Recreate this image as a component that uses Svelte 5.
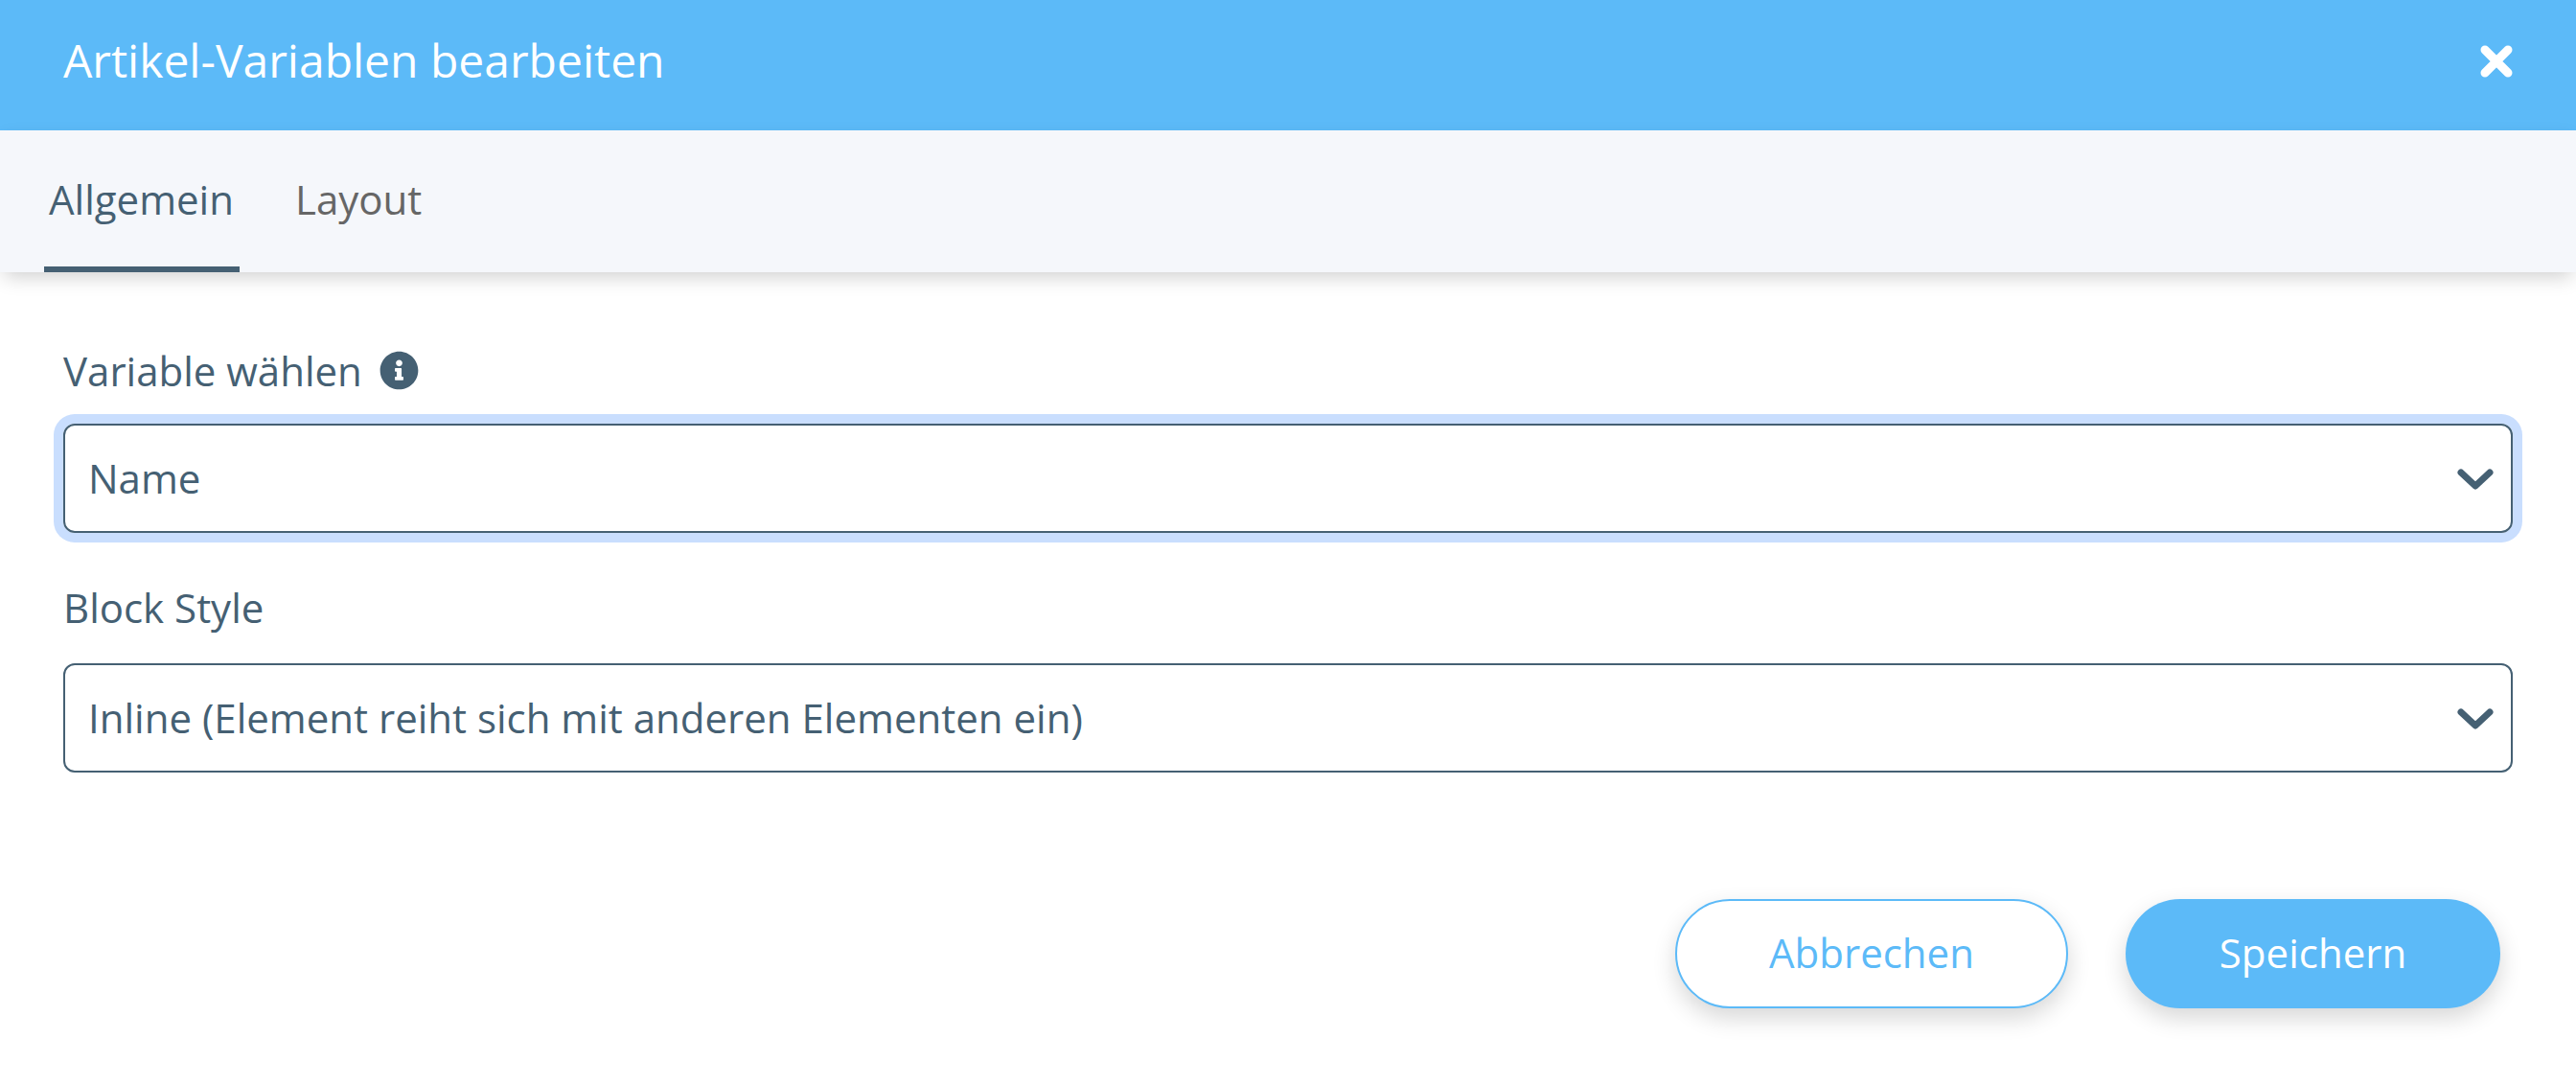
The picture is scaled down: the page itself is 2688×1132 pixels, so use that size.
<script lang="ts">
	let tabs = ['Allgemein', 'Layout'];
	let active = $state('Allgemein');
	let variable = $state('Name');
	let blockStyle = $state('inline');
</script>

<div class="modal">
	<header class="modal-header">
		<h1>Artikel-Variablen bearbeiten</h1>
		<button class="close" aria-label="Schließen">
			<svg viewBox="0 0 34 34" width="34" height="34">
				<path d="M5 5 L29 29 M29 5 L5 29" fill="none" stroke="#fff" stroke-width="9" stroke-linecap="round" />
			</svg>
		</button>
	</header>

	<nav class="tabs">
		{#each tabs as tab}
			<button class="tab" class:active={active === tab} onclick={() => active = tab}>{tab}</button>
		{/each}
	</nav>

	<div class="form">
		<div class="form-group">
			<label for="variable">
				Variable wählen
				<svg class="info" viewBox="0 0 512 512" width="41" height="41">
					<path fill="#456073" d="M256 8C119.043 8 8 119.083 8 256c0 136.997 111.043 248 248 248s248-111.003 248-248C504 119.083 392.957 8 256 8zm0 110c23.196 0 42 18.804 42 42s-18.804 42-42 42-42-18.804-42-42 18.804-42 42-42zm56 254c0 6.627-5.373 12-12 12h-88c-6.627 0-12-5.373-12-12v-24c0-6.627 5.373-12 12-12h12v-64h-12c-6.627 0-12-5.373-12-12v-24c0-6.627 5.373-12 12-12h64c6.627 0 12 5.373 12 12v100h12c6.627 0 12 5.373 12 12v24z" />
				</svg>
			</label>
			<div class="select-wrap focused">
				<select id="variable" bind:value={variable}>
					<option>Name</option>
				</select>
				<svg class="chevron" viewBox="0 0 38 24" width="38" height="24">
					<path d="M4 5 L19 19 L34 5" fill="none" stroke="#456073" stroke-width="7" stroke-linecap="round" stroke-linejoin="round" />
				</svg>
			</div>
		</div>

		<div class="form-group">
			<label class="label-block" for="block-style">Block Style</label>
			<div class="select-wrap">
				<select id="block-style" bind:value={blockStyle}>
					<option value="inline">Inline (Element reiht sich mit anderen Elementen ein)</option>
				</select>
				<svg class="chevron" viewBox="0 0 38 24" width="38" height="24">
					<path d="M4 5 L19 19 L34 5" fill="none" stroke="#456073" stroke-width="7" stroke-linecap="round" stroke-linejoin="round" />
				</svg>
			</div>
		</div>

		<div class="actions">
			<button class="btn btn-outline">Abbrechen</button>
			<button class="btn btn-primary">Speichern</button>
		</div>
	</div>
</div>

<style>
	:global(body) {
		background: #fff;
	}
	.modal {
		font-family: "Open Sans", sans-serif;
		color: #456073;
		width: 2688px;
		height: 1132px;
		overflow: hidden;
	}
	.modal-header {
		height: 136px;
		box-sizing: border-box;
		background: #5cbaf8;
		display: flex;
		align-items: center;
		justify-content: space-between;
		padding: 0 66px 8px 66px;
	}
	h1 {
		margin: 0;
		padding-bottom: 3px;
		font-size: 48px;
		font-weight: 400;
		color: #fff;
	}
	.close {
		background: none;
		border: 0;
		padding: 0;
		display: flex;
	}
	.tabs {
		height: 148px;
		box-sizing: border-box;
		background: #f5f7fb;
		display: flex;
		gap: 53px;
		padding-left: 46px;
		box-shadow: 0 8px 20px -4px rgba(0, 0, 0, 0.2);
		position: relative;
	}
	.tab {
		background: none;
		border: 0;
		border-bottom: 6px solid transparent;
		padding: 0 6px 0 5px;
		font: inherit;
		font-size: 42px;
		color: #666;
	}
	.tab.active {
		color: #456073;
		border-bottom-color: #456073;
	}
	.form {
		padding: 74px 66px 0;
	}
	.form-group {
		margin-bottom: 49px;
	}
	label {
		display: flex;
		align-items: center;
		gap: 18px;
		height: 56px;
		font-size: 42px;
		margin-bottom: 28px;
	}
	.label-block {
		margin-bottom: 31px;
	}
	.select-wrap {
		position: relative;
		border-radius: 12px;
	}
	.select-wrap.focused {
		box-shadow: 0 0 0 10px #c9defe;
	}
	select {
		display: block;
		width: 100%;
		height: 114px;
		box-sizing: border-box;
		appearance: none;
		background: #fff;
		border: 2px solid #456073;
		border-radius: 12px;
		padding: 0 24px 2px;
		font: inherit;
		font-size: 42px;
		color: #456073;
		outline: none;
	}
	.chevron {
		position: absolute;
		right: 20px;
		top: 46px;
		pointer-events: none;
	}
	.actions {
		display: flex;
		justify-content: flex-end;
		gap: 60px;
		padding-right: 13px;
		margin-top: 132px;
	}
	.btn {
		height: 114px;
		box-sizing: border-box;
		border-radius: 57px;
		padding: 0 0 4px;
		font: inherit;
		font-size: 42px;
		box-shadow: 0 10px 24px rgba(0, 0, 0, 0.16);
	}
	.btn-outline {
		width: 410px;
		background: #fff;
		border: 2px solid #5cbaf8;
		color: #5cbaf8;
	}
	.btn-primary {
		width: 391px;
		background: #5cbaf8;
		border: 0;
		color: #fff;
	}
</style>
